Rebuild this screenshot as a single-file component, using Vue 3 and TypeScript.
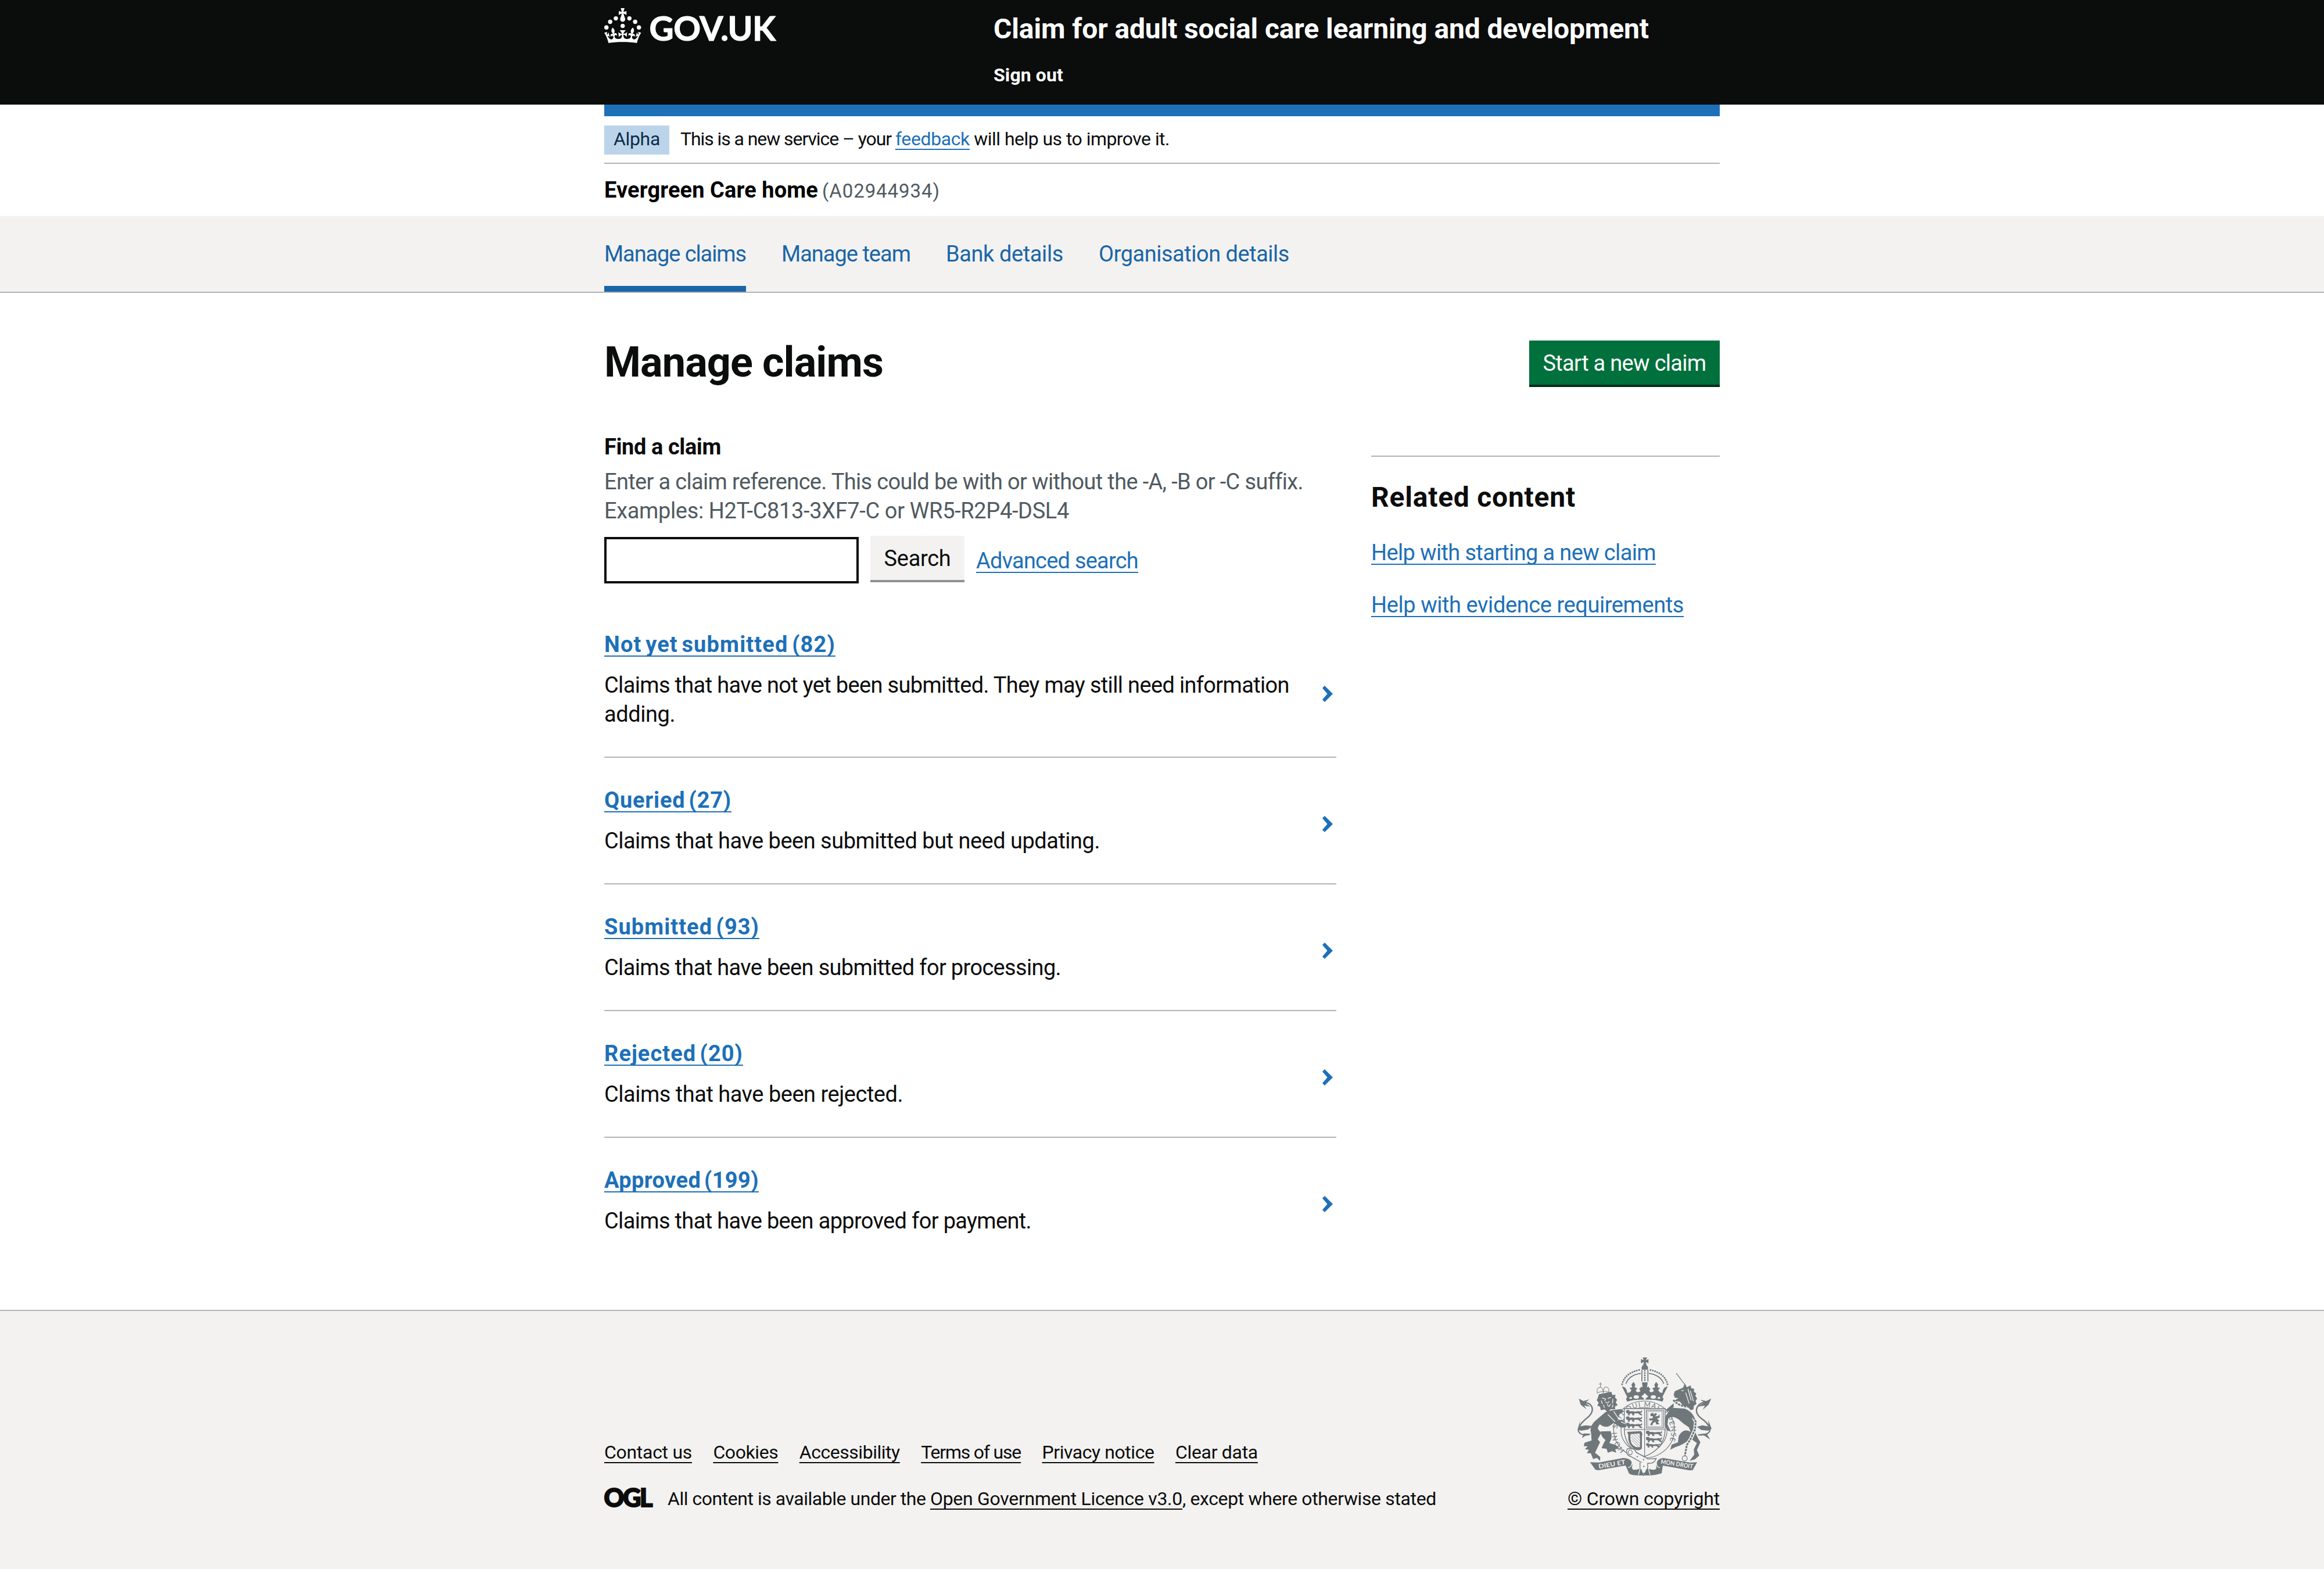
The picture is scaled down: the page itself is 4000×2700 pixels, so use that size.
<script setup lang="ts">
import type { Directive } from 'vue'

interface FittedText {
  text: string
  width: number
}

interface ClaimGroup {
  title: string
  titleWidth: number
  lines: FittedText[]
}

const navigation: FittedText[] = [
  { text: 'Manage claims', width: 244 },
  { text: 'Manage team', width: 222 },
  { text: 'Bank details', width: 202 },
  { text: 'Organisation details', width: 328 },
]

const claimGroups: ClaimGroup[] = [
  {
    title: 'Not yet submitted (82)',
    titleWidth: 398,
    lines: [
      { text: 'Claims that have not yet been submitted. They may still need information', width: 1179 },
      { text: 'adding.', width: 122 },
    ],
  },
  {
    title: 'Queried (27)',
    titleWidth: 219,
    lines: [{ text: 'Claims that have been submitted but need updating.', width: 853 }],
  },
  {
    title: 'Submitted (93)',
    titleWidth: 267,
    lines: [{ text: 'Claims that have been submitted for processing.', width: 786 }],
  },
  {
    title: 'Rejected (20)',
    titleWidth: 239,
    lines: [{ text: 'Claims that have been rejected.', width: 514 }],
  },
  {
    title: 'Approved (199)',
    titleWidth: 266,
    lines: [{ text: 'Claims that have been approved for payment.', width: 735 }],
  },
]

const relatedLinks: FittedText[] = [
  { text: 'Help with starting a new claim', width: 490 },
  { text: 'Help with evidence requirements', width: 538 },
]

const footerLinks: FittedText[] = [
  { text: 'Contact us', width: 151 },
  { text: 'Cookies', width: 112 },
  { text: 'Accessibility', width: 173 },
  { text: 'Terms of use', width: 172 },
  { text: 'Privacy notice', width: 193 },
  { text: 'Clear data', width: 142 },
]

// Spreads or tightens the tracking so that a line takes up the given width.
const vFit: Directive<HTMLElement, number> = {
  mounted(el, { value }) {
    const length = (el.textContent ?? '').length
    el.style.letterSpacing = '0.001px'
    const natural = el.getBoundingClientRect().width
    el.style.letterSpacing = `${((value - natural) / length).toFixed(3)}px`
  },
}
</script>

<template>
  <div class="page">
    <header class="header">
      <div class="container header-row">
        <div class="header-logo">
          <svg class="logo" viewBox="0 0 324 62" role="img" aria-label="GOV.UK">
            <circle cx="20" cy="17.6" r="3.7" />
            <circle cx="10.2" cy="23.5" r="3.7" />
            <circle cx="3.7" cy="33.2" r="3.7" />
            <circle cx="31.7" cy="30.6" r="3.7" />
            <circle cx="43.3" cy="17.6" r="3.7" />
            <circle cx="53.2" cy="23.5" r="3.7" />
            <circle cx="59.7" cy="33.2" r="3.7" />
            <path d="M33.1,9.8c.2-.1.3-.3.5-.5l4.6,2.4v-6.8l-4.6,1.5c-.1-.2-.3-.3-.5-.5l1.9-5.9h-6.7l1.9,5.9c-.2.1-.3.3-.5.5l-4.6-1.5v6.8l4.6-2.4c.1.2.3.3.5.5l-2.6,8c-.9,2.8,1.2,5.7,4.1,5.7h0c3,0,5.1-2.9,4.1-5.7l-2.6-8ZM37,37.9s-3.4,3.8-4.1,6.1c2.2,0,4.2-.5,6.4-2.8l-.7,8.5c-2-2.8-4.4-4.1-5.7-3.8.1,3.1.5,6.7,5.8,7.2,3.7.3,6.7-1.5,7-3.8.4-2.6-2-4.3-3.7-1.6-1.4-4.5,2.4-6.1,4.9-3.2-1.9-4.5-1.8-7.7,2.4-10.9,3,4,2.6,7.3-1.2,11.1,2.4-1.3,6.2,0,4,4.6-1.2-2.8-3.7-2.2-4.2.2-.3,1.7.7,3.7,3,4.2,1.9.3,4.7-.9,7-5.9-1.3,0-2.4.7-3.9,1.7l2.4-8c.6,2.3,1.4,3.7,2.2,4.5.6-1.6.5-2.8,0-5.3l5,1.8c-2.6,3.6-5.2,8.7-7.3,17.5-7.4-1.1-15.7-1.7-24.5-1.7h0c-8.8,0-17.1.6-24.5,1.7-2.1-8.9-4.7-13.9-7.3-17.5l5-1.8c-.5,2.5-.6,3.7,0,5.3.8-.8,1.6-2.3,2.2-4.5l2.4,8c-1.5-1-2.6-1.7-3.9-1.7,2.3,5,5.2,6.2,7,5.9,2.3-.4,3.3-2.4,3-4.2-.5-2.4-3-3.1-4.2-.2-2.2-4.6,1.6-6,4-4.6-3.7-3.7-4.2-7.1-1.2-11.1,4.2,3.2,4.3,6.4,2.4,10.9,2.5-2.8,6.3-1.3,4.9,3.2-1.8-2.7-4.1-1-3.7,1.6.3,2.3,3.3,4.1,7,3.8,5.4-.5,5.7-4.2,5.8-7.2-1.3-.2-3.7,1-5.7,3.8l-.7-8.5c2.2,2.3,4.2,2.7,6.4,2.8-.7-2.3-4.1-6.1-4.1-6.1h10.6,0Z" />
            <text x="77.5" y="56" textLength="217.5" lengthAdjust="spacing">GOV.UK</text>
          </svg>
        </div>
        <div class="header-content">
          <a class="service-name"><span v-fit="1128">Claim for adult social care learning and development</span></a>
          <a class="sign-out"><span v-fit="120">Sign out</span></a>
        </div>
      </div>
    </header>

    <div class="container">
      <div class="blue-bar"></div>
      <div class="phase-banner">
        <strong class="tag"><span v-fit="80">Alpha</span></strong>
        <p class="phase-text"><span v-fit="370">This is a new service – your </span><a v-fit="128" class="link">feedback</a><span v-fit="344"> will help us to improve it.</span></p>
      </div>
      <div class="organisation">
        <strong v-fit="368">Evergreen Care home</strong>
        <span v-fit="203" class="organisation-id">(A02944934)</span>
      </div>
    </div>

    <nav class="navigation">
      <ul class="container navigation-list">
        <li v-for="(item, i) in navigation" :key="item.text" :class="{ current: i === 0 }">
          <a v-fit="item.width">{{ item.text }}</a>
        </li>
      </ul>
    </nav>

    <main class="container main">
      <div class="title-row">
        <h1><span v-fit="480">Manage claims</span></h1>
        <button class="button button-start"><span v-fit="281">Start a new claim</span></button>
      </div>
      <div class="columns">
        <div class="column-main">
          <label class="label"><span v-fit="201">Find a claim</span></label>
          <div class="hint">
            <div><span v-fit="1203">Enter a claim reference. This could be with or without the -A, -B or -C suffix.</span></div>
            <div><span v-fit="800">Examples: H2T-C813-3XF7-C or WR5-R2P4-DSL4</span></div>
          </div>
          <div class="search">
            <input class="input" type="text" />
            <button class="button button-search"><span v-fit="115">Search</span></button>
            <a class="link advanced"><span v-fit="279">Advanced search</span></a>
          </div>
          <ul class="claims">
            <li v-for="group in claimGroups" :key="group.title" class="claim" :class="{ tall: group.lines.length > 1 }">
              <div>
                <h2><a v-fit="group.titleWidth" class="link">{{ group.title }}</a></h2>
                <p>
                  <span v-for="line in group.lines" :key="line.text" class="line"><span v-fit="line.width">{{ line.text }}</span></span>
                </p>
              </div>
              <svg class="chevron" viewBox="0 0 18 28"><path d="M4 0 L18 14 L4 28 L0 24 L8.6 14 L0 4 Z" /></svg>
            </li>
          </ul>
        </div>
        <aside class="related">
          <h2><span v-fit="352">Related content</span></h2>
          <p v-for="item in relatedLinks" :key="item.text"><a v-fit="item.width" class="link">{{ item.text }}</a></p>
        </aside>
      </div>
    </main>

    <footer class="footer">
      <div class="container footer-row">
        <div>
          <ul class="footer-links">
            <li v-for="item in footerLinks" :key="item.text"><a v-fit="item.width">{{ item.text }}</a></li>
          </ul>
          <div class="licence">
            <svg class="ogl" viewBox="0 0 82 34" role="img" aria-label="OGL">
              <text x="-0.5" y="32.5" textLength="84" lengthAdjust="spacing">OGL</text>
            </svg>
            <p><span v-fit="452">All content is available under the </span><a v-fit="434">Open Government Licence v3.0</a><span v-fit="437">, except where otherwise stated</span></p>
          </div>
        </div>
        <div class="copyright">
          <svg class="crest" viewBox="102 78 696 612" aria-hidden="true">
            <defs>
              <path id="motto" d="M352 560 A140 132 0 1 1 546 560" />
              <g id="passant">
                <path d="M0 4 L6 0 L16 1 L19 7 L32 6 Q48 11 62 6 L76 8 L80 2 L84 6 L80 14 L72 14 L82 22 L84 28 L72 26 L64 18 L48 17 L40 20 L44 27 L34 28 L30 18 L20 19 L18 28 L8 27 L12 20 L4 17 L0 11 Z" />
              </g>
              <g id="crown-half">
                <path d="M336 216 Q350 158 426 142" class="beads" />
                <path d="M355 214 Q372 168 432 160" class="line thick" />
                <path d="M449 296 Q400 294 362 306 L356 292 L362 282 L334 226 L352 234 Q362 246 362 260 Q378 262 384 246 L374 236 L388 232 L384 218 L394 204 L404 218 L400 232 L414 236 L406 250 Q416 264 430 252 L424 238 L442 232 L438 208 L449 208 Z" />
                <ellipse cx="380" cy="287" rx="7" ry="5" class="cut" />
                <ellipse cx="409" cy="282" rx="14" ry="9" class="cut" />
              </g>
            </defs>

            <!-- crown -->
            <use href="#crown-half" />
            <use href="#crown-half" transform="matrix(-1 0 0 1 906 0)" />
            <path d="M440 206 L466 206 L459 235 L474 228 L474 252 L459 244 L466 264 L440 264 L447 244 L432 252 L432 228 L447 235 Z" />
            <path d="M453 264 L471 279 L453 294 L435 279 Z" class="cut" />
            <path d="M442 78 H465 L458 92 L472 86 V108 L458 101 L462 118 Q474 128 468 141 H438 Q432 128 444 118 L448 101 L433 108 V86 L448 92 Z" />
            <path d="M438 142 V202 M469 142 V202" class="line thick" />
            <path d="M453 146 V204" class="beads" />

            <!-- garter -->
            <ellipse cx="449" cy="450" rx="157" ry="147" class="outline" />
            <ellipse cx="449" cy="452" rx="119" ry="116" class="outline" />
            <text class="motto"><textPath href="#motto" startOffset="4" textLength="575">HONI SOIT QUI MAL Y PENSE</textPath></text>

            <!-- shield -->
            <path d="M347 342 H558 V450 Q556 548 452 590 Q349 548 347 450 Z" class="shield" />
            <path d="M452 342 V590 M347 450 H558" class="line" />
            <use href="#passant" x="356" y="349" />
            <use href="#passant" x="356" y="382" />
            <use href="#passant" x="356" y="415" />
            <use href="#passant" x="459" y="456" />
            <use href="#passant" x="459" y="488" />
            <use href="#passant" transform="translate(460 520) scale(.85)" />
            <rect x="461" y="350" width="88" height="92" class="outline" />
            <rect x="468" y="357" width="74" height="78" class="outline thin" />
            <path d="M482 368 L496 364 L500 372 L510 364 L516 372 L506 382 L522 380 L528 370 L530 388 L516 394 L528 404 L520 410 L528 422 L512 424 L508 410 L496 416 L492 428 L480 426 L488 412 L494 402 L478 404 L474 394 L492 392 L496 382 L482 380 Z" />
            <path d="M362 462 L432 458 Q444 466 438 486 L438 548 Q420 566 394 548 Q362 520 368 480 Z" />
            <path d="M380 474 L426 470 Q430 505 428 540 Q404 546 386 524 Q374 500 380 474 Z" class="cut" />
            <path d="M384 480 L428 522 M382 490 L426 534 M384 504 L420 540 M394 474 L428 508 M408 472 L428 492" class="line thin" />

            <!-- lion -->
            <path d="M216 268 L280 255 L286 272 L302 270 L299 284 L310 296 L303 310 L313 325 L299 330 L300 346 L276 345 L262 362 L246 346 L226 350 L222 332 L208 326 L215 311 L205 299 L211 284 Z" />
            <path d="M232 287 L250 292 L246 302 M262 290 L278 284 M250 306 Q258 320 270 304 M260 318 Q262 332 270 330 L276 318 M228 300 L234 318 M288 292 L286 316 M240 322 L244 338 M290 322 L284 336" class="cut-line" />
            <path d="M208 264 Q202 232 224 232 Q236 232 238 262 M238 262 Q240 228 254 230 Q272 236 266 258 M224 208 V230 M217 215 H231 M206 262 Q238 246 270 258" class="line dotted" />
            <path d="M250 360 L205 398 Q162 432 176 470 L178 506 L142 518 L138 536 L158 536 L144 552 L164 554 L154 572 L174 572 L186 602 L206 596 L222 612 L223 592 L196 570 L222 515 L210 500 L228 468 L210 446 L222 424 Q250 446 276 428 L292 416 L330 440 L358 438 L354 416 L336 400 L312 402 L322 372 L346 356 L330 344 L300 348 L276 352 Z" />
            <path d="M224 460 L276 458 Q290 486 270 520 L304 530 L322 548 L300 552 L306 570 L284 562 L262 570 L256 550 L230 546 L240 522 L250 504 Q228 490 224 460 Z" />
            <path d="M212 440 L222 424 M262 372 L300 410 M292 356 L320 398 M330 410 L352 420" class="cut-line" />
            <path d="M168 476 Q118 484 110 456 Q108 430 150 394 Q190 364 180 334 Q168 308 140 312" class="line tail" />
            <path d="M112 290 L136 303 L168 294 L144 312 L172 332 L140 326 L152 346 L122 322 Z M120 402 L116 434 L146 428 L184 432 L160 450 L124 456 L106 450 Z M128 494 L138 470 L176 472 L150 480 Z" />

            <!-- unicorn -->
            <path d="M616 160 L658 216" class="horn" />
            <path d="M602 270 L608 252 L650 234 L660 212 L670 232 L690 222 L692 236 L708 240 L706 254 L719 264 L714 276 L723 290 L715 302 L720 318 L706 328 L704 346 L690 350 L672 330 L650 326 L634 306 L604 302 L626 288 L608 286 Z" />
            <path d="M642 250 L654 248 M676 240 L692 300 M688 250 L704 304 M664 260 L682 316" class="cut-line" />
            <path d="M600 298 Q640 340 700 330" class="line chain" />
            <path d="M578 356 Q574 338 604 338 L660 342 Q706 362 712 402 L708 440 Q712 470 740 516 L722 556 L734 584 L712 604 L684 612 L708 580 L706 552 L722 520 L688 496 Q658 528 612 540 L584 554 L592 528 L624 516 L628 484 Q652 440 690 462 L680 438 Q650 420 630 400 Q600 376 574 392 L570 424 L588 462 L566 452 L556 424 L560 380 Z" />
            <path d="M728 478 Q792 480 790 446 Q780 416 744 392 Q710 366 724 334 Q740 308 762 312" class="line tail" />
            <path d="M796 290 L770 303 L740 296 L760 312 L722 332 L764 326 L752 348 L782 322 Z M780 400 L784 434 L750 428 L722 436 L744 452 L780 456 L798 446 Z M790 502 L772 470 L732 474 L762 482 Z M560 350 L602 314 L602 334 L580 356 Z" />
            <path d="M704 388 L716 410 L712 450 L690 498 L670 530 L660 584" class="line chain-cut" />
            <path d="M704 388 L716 410 L712 450 L690 498 L670 530 L660 584" class="line chain" />
            <circle cx="659" cy="599" r="13" class="outline" />

            <!-- belt end and scroll -->
            <path d="M170 619 L216 620 L340 597 Q392 598 388 640 Q380 668 430 652 Q449 640 470 652 Q518 668 512 640 Q512 600 548 597 L684 620 L723 619 L700 660 L684 661 L546 636 L540 676 Q500 690 449 686 Q390 690 372 678 L354 636 L214 660 L198 658 Z" />
            <path d="M390 608 Q384 650 366 646 M512 608 Q512 650 532 646 M400 648 Q420 640 428 654 L420 684 M500 648 Q482 640 472 654 L480 684" class="cut-line" />
            <path d="M362 550 Q400 540 408 568 L470 602 L512 600 Q500 626 478 624 L450 628 L386 592 Q350 582 362 550 Z" class="belt" />
            <ellipse cx="378" cy="568" rx="10" ry="13" class="outline" />
            <path d="M428 620 V650 L446 688 L468 650 V622" class="belt" />
            <path d="M434 656 Q438 682 448 676 Q458 682 462 656" class="line thick" />
            <circle cx="414" cy="590" r="3.5" /><circle cx="446" cy="606" r="3.5" /><circle cx="448" cy="640" r="3.5" />
            <text class="scroll" transform="translate(216 652) rotate(-9.5)" textLength="140" lengthAdjust="spacingAndGlyphs">DIEU ET</text>
            <text class="scroll" transform="translate(534 626) rotate(9)" textLength="168" lengthAdjust="spacingAndGlyphs">MON DROIT</text>
          </svg>
          <a v-fit="262">© Crown copyright</a>
        </div>
      </div>
    </footer>
  </div>
</template>

<style>
body {
  margin: 0;
  background: #ffffff;
}
</style>

<style scoped>
.page {
  display: flex;
  flex-direction: column;
  width: 4000px;
  height: 2700px;
  color: #0b0c0c;
  font-family: Roboto, "Liberation Sans", sans-serif;
  font-size: 38px;
  line-height: 50px;
  white-space: nowrap;
}

.container {
  box-sizing: border-box;
  width: 1920px;
  margin: 0 auto;
}

h1,
h2,
p,
ul {
  margin: 0;
  padding: 0;
  list-style: none;
}

.link {
  color: #1d70b8;
}

.link,
.footer a {
  text-decoration: underline;
  text-decoration-thickness: 2px;
  text-underline-offset: 6px;
  text-decoration-skip-ink: none;
}

.header {
  height: 180px;
  background: #0b0c0c;
  color: #ffffff;
}

.header-row {
  display: flex;
}

.header-logo {
  width: 670px;
  padding-top: 14px;
}

.logo {
  display: block;
  width: 324px;
  height: 62px;
  overflow: visible;
  fill: #ffffff;
}

.logo text {
  stroke: #ffffff;
  stroke-width: 1.2;
  font: 700 58px Lato, sans-serif;
}

.header-content {
  display: flex;
  flex-direction: column;
  gap: 29px;
  padding-top: 20px;
  font-weight: 700;
}

.service-name {
  font-size: 48px;
  line-height: 60px;
}

.sign-out {
  font-size: 32px;
  line-height: 40px;
}

.blue-bar {
  height: 20px;
  background: #1d70b8;
}

.phase-banner {
  display: flex;
  box-sizing: border-box;
  height: 82px;
  padding-top: 16px;
  border-bottom: 2px solid #b1b4b6;
  font-size: 32px;
  line-height: 40px;
}

.tag {
  box-sizing: border-box;
  width: 112px;
  height: 50px;
  padding: 3px 0 0 16px;
  background: #bbd4ea;
  color: #0c2d4a;
  font-weight: 400;
}

.phase-text {
  margin-left: 19px;
  padding-top: 3px;
}

.organisation {
  display: flex;
  gap: 7px;
  box-sizing: border-box;
  height: 90px;
  padding-top: 20px;
  color: #000000;
}

.organisation-id {
  color: #505a5f;
  font-size: 33px;
  line-height: 54px;
}

.navigation {
  height: 130px;
  border-bottom: 2px solid #b1b4b6;
  background: #f3f2f1;
  color: #1a65a6;
}

.navigation-list {
  display: flex;
  gap: 61px;
}

.navigation-list li {
  box-sizing: border-box;
  height: 130px;
  padding-top: 40px;
}

.navigation-list .current {
  border-bottom: 10px solid #1a65a6;
}

.main {
  flex: 1;
  padding-top: 80px;
}

.title-row {
  display: flex;
  justify-content: space-between;
  height: 160px;
}

h1 {
  font-size: 72px;
  font-weight: 700;
  line-height: 80px;
}

.button {
  box-sizing: border-box;
  height: 76px;
  padding: 14px 0 12px;
  border: 0;
  font: inherit;
  line-height: 50px;
}

.button-start {
  width: 328px;
  margin-top: 2px;
  background: #00703c;
  box-shadow: 0 4px 0 #002d18;
  color: #ffffff;
}

.columns {
  display: flex;
  justify-content: space-between;
}

.column-main {
  width: 1260px;
}

.label {
  display: block;
  font-weight: 700;
}

.hint {
  margin-top: 10px;
  color: #505a5f;
}

.search {
  display: flex;
  align-items: flex-start;
  gap: 20px;
  height: 82px;
  margin-top: 18px;
}

.input {
  box-sizing: border-box;
  width: 438px;
  height: 80px;
  margin: 2px 0 0;
  border: 4px solid #0b0c0c;
  border-radius: 0;
  background: #ffffff;
}

.button-search {
  width: 162px;
  background: #f3f2f1;
  box-shadow: 0 4px 0 #929191;
  color: #0b0c0c;
}

.advanced {
  margin-top: 18px;
}

.claims {
  margin-top: 32px;
}

.claim {
  display: flex;
  justify-content: space-between;
  padding: 48px 6px 48px 0;
  border-bottom: 2px solid #b1b4b6;
}

.claim:last-child {
  border-bottom: 0;
}

.claim h2 {
  font-size: 38px;
  font-weight: 700;
  word-spacing: -4px;
}

.claim p {
  margin-top: 20px;
}

.line {
  display: block;
}

.chevron {
  flex: none;
  width: 18px;
  height: 28px;
  margin-top: 52px;
  fill: #1d70b8;
}

.tall .chevron {
  margin-top: 96px;
}

.related {
  align-self: flex-start;
  width: 600px;
  margin-top: 40px;
  padding-top: 40px;
  border-top: 2px solid #b1b4b6;
}

.related h2 {
  font-size: 48px;
  font-weight: 700;
  line-height: 60px;
}

.related p {
  margin-top: 40px;
}

.footer {
  box-sizing: border-box;
  height: 446px;
  padding-top: 80px;
  border-top: 2px solid #b1b4b6;
  background: #f3f2f1;
  font-size: 32px;
  line-height: 40px;
}

.footer-row {
  display: flex;
  justify-content: space-between;
  align-items: flex-end;
}

.footer-links {
  display: flex;
  gap: 36.4px;
}

.licence {
  display: flex;
  gap: 27px;
  margin-top: 40px;
}

.ogl {
  width: 82px;
  height: 34px;
  margin-top: 1px;
  overflow: visible;
}

.ogl text {
  fill: #0b0c0c;
  stroke: #0b0c0c;
  stroke-width: 2;
  font: 900 43px Lato, sans-serif;
}

.copyright {
  display: flex;
  flex-direction: column;
  align-items: flex-end;
}

.crest {
  display: block;
  width: 232px;
  height: 204px;
  margin: 0 14px 19px 0;
  fill: #6f777b;
}

.crest .cut {
  fill: #f3f2f1;
}

.crest .line,
.crest .outline,
.crest .horn,
.crest .beads {
  fill: none;
  stroke: #6f777b;
  stroke-width: 3.5;
}

.crest .thick {
  stroke-width: 5;
}

.crest .thin {
  stroke-width: 2;
}

.crest .tail {
  stroke-width: 7;
}

.crest .horn {
  stroke-width: 5;
  stroke-dasharray: 6 2;
}

.crest .beads {
  stroke-width: 9;
  stroke-linecap: round;
  stroke-dasharray: 0.1 12;
}

.crest .dotted {
  stroke-width: 4;
  stroke-dasharray: 4 2;
}

.crest .chain {
  stroke-width: 9;
  stroke-dasharray: 12 4;
}

.crest .chain-cut {
  stroke: #f3f2f1;
  stroke-width: 18;
}

.crest .shield,
.crest .belt {
  fill: #f3f2f1;
  stroke: #6f777b;
  stroke-width: 4;
}

.crest .cut-line {
  fill: none;
  stroke: #f3f2f1;
  stroke-width: 4;
}

.crest .motto {
  font: 400 36px Lato, sans-serif;
}

.crest .scroll {
  fill: #f3f2f1;
  font: 700 32px Lato, sans-serif;
}
</style>
